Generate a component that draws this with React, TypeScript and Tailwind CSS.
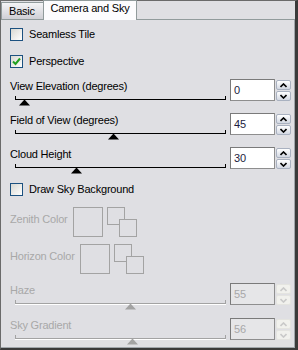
import React from 'react'

function CheckBox({ checked }: { checked?: boolean }) {
  return (
    <span className="w-[13px] h-[13px] shrink-0 border border-[#1c5180] bg-linear-to-br from-[#d8d8d2] to-white flex items-center justify-center">
      {checked && (
        <svg width="9" height="9" viewBox="0 0 9 9">
          <path d="M1 4.5 L3.5 7 L8 1.5" stroke="#21a121" strokeWidth="2" fill="none" />
        </svg>
      )}
    </span>
  )
}

function CheckRow({ label, checked, className }: { label: string; checked?: boolean; className?: string }) {
  return (
    <div className={`flex items-center h-[13px] gap-[6px] ${className ?? ''}`}>
      <CheckBox checked={checked} />
      <span className="leading-[13px]">{label}</span>
    </div>
  )
}

function Arrow({ up, disabled }: { up?: boolean; disabled?: boolean }) {
  const fill = disabled ? '#c9c9c9' : '#000'
  return (
    <svg width="7" height="5" viewBox="0 0 7 5">
      {up ? (
        <path d="M0.5 4 L3.5 1 L6.5 4" stroke={fill} strokeWidth="1.6" fill="none" />
      ) : (
        <path d="M0.5 1 L3.5 4 L6.5 1" stroke={fill} strokeWidth="1.6" fill="none" />
      )}
    </svg>
  )
}

function SliderGroup({
  label,
  value,
  thumb,
  disabled,
  className,
}: {
  label: string
  value: string
  thumb: number
  disabled?: boolean
  className?: string
}) {
  const line = disabled ? 'bg-[#a3a3a3]' : 'bg-black'
  return (
    <div className={`flex items-start ${className ?? ''}`}>
      <div className="w-[215px] flex flex-col">
        <span className={`leading-[13px] pt-[1px] ${disabled ? 'text-[#a8a8a8]' : ''}`}>{label}</span>
        <div className="relative ml-[5px] w-[211px] h-[12px]">
          <div className={`absolute left-0 right-0 top-[6px] h-px ${line}`} />
          {disabled && <div className="absolute left-0 right-0 top-[7px] h-px bg-white" />}
          <div className={`absolute left-0 top-[3px] h-[4px] w-px ${line}`} />
          <div className={`absolute right-0 top-[3px] h-[4px] w-px ${line}`} />
          <svg
            className="absolute top-[6px]"
            style={{ left: thumb - 5.5 }}
            width="11"
            height="7"
            viewBox="0 0 11 7"
          >
            <polygon points="5.5,0.5 11,6.5 0,6.5" fill={disabled ? '#a3a3a3' : '#000'} />
          </svg>
        </div>
      </div>
      <div
        className={`ml-[5px] w-[45px] h-[22px] border border-[#8e8e8e] border-t-[#7a7a7a] border-l-[#7a7a7a] pl-[3px] flex items-center ${
          disabled ? 'bg-[#e6e6e8] text-[#a8a8a8]' : 'bg-white text-[#1c1c40]'
        }`}
      >
        {value}
      </div>
      <div className="ml-px mt-px w-[15px] flex flex-col gap-px">
        {[true, false].map((up) => (
          <div
            key={String(up)}
            className={`h-[10px] rounded-[2px] border flex items-center justify-center ${
              disabled
                ? 'border-[#e4e4e0] bg-[#f1f1ed]'
                : 'border-[#a9b1c0] bg-linear-to-b from-white to-[#d3d8e2]'
            }`}
          >
            <Arrow up={up} disabled={disabled} />
          </div>
        ))}
      </div>
    </div>
  )
}

function ColorRow({ label, className }: { label: string; className?: string }) {
  return (
    <div className={`flex items-start gap-[5px] text-[#a8a8a8] ${className ?? ''}`}>
      <span className="leading-[13px] mt-[6px]">{label}</span>
      <div className="w-[30px] h-[30px] border border-[#a3a3a3]" />
      <div className="relative ml-[-1px] w-[31px] h-[30px]">
        <div className="absolute left-0 top-0 w-[18px] h-[18px] border border-[#a3a3a3]" />
        <div className="absolute left-[12px] top-[12px] w-[18px] h-[18px] border border-[#a3a3a3] bg-[#dfdfe3]" />
      </div>
    </div>
  )
}

export default function App() {
  return (
    <div className="w-[298px] h-[350px] bg-[#dfdfe3] border-t border-l border-r-[3px] border-b-[2px] border-t-[#6a6a6a] border-l-[#6a6a6a] border-r-[#3a3a3a] border-b-[#3a3a3a] flex flex-col text-[11px] tracking-[-0.2px] text-black font-['Liberation_Sans',Arial,sans-serif]">
      {/* Tabs */}
      <div className="h-[19px] shrink-0 flex items-end border-b border-[#919b9c]">
        <div className="w-[42px] h-[17px] border-t border-l border-[#919b9c] bg-linear-to-b from-[#f4f4f6] to-[#cfcfd5] pl-[7px] leading-[16px]">
          Basic
        </div>
        <div className="relative z-10 -mb-px w-[94px] h-[20px] border-t border-l border-r border-[#919b9c] bg-[#fcfcfe] flex justify-center leading-[14px]">
          Camera and Sky
        </div>
      </div>

      {/* Panel */}
      <div className="flex-1 flex flex-col pl-[9px] pt-[8px] border-r border-b border-[#a0a6ab]">
        <CheckRow label="Seamless Tile" />
        <CheckRow label="Perspective" checked className="mt-[14px]" />
        <SliderGroup label="View Elevation (degrees)" value="0" thumb={9.5} className="mt-[11px] h-[34px]" />
        <SliderGroup label="Field of View (degrees)" value="45" thumb={98.5} className="h-[34px]" />
        <SliderGroup label="Cloud Height" value="30" thumb={61.5} className="h-[34px]" />
        <CheckRow label="Draw Sky Background" className="mt-[2px]" />
        <ColorRow label="Zenith Color" className="mt-[11px]" />
        <ColorRow label="Horizon Color" className="mt-[7px]" />
        <SliderGroup label="Haze" value="55" thumb={115.5} disabled className="mt-[9px] h-[35px]" />
        <SliderGroup label="Sky Gradient" value="56" thumb={117} disabled />
      </div>
    </div>
  )
}
